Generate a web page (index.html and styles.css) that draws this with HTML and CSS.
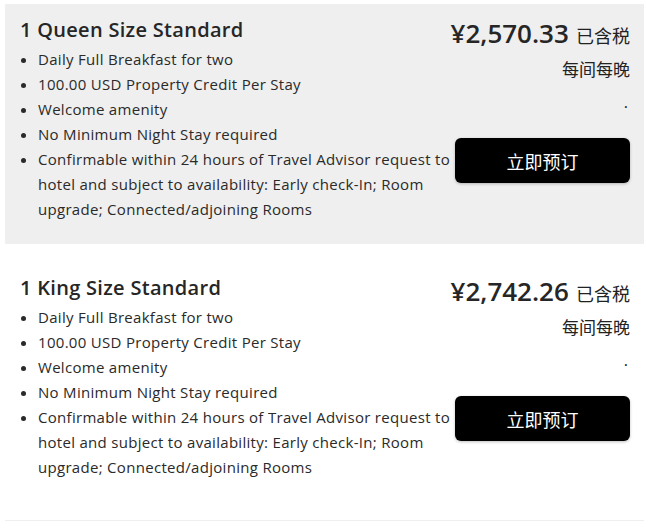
FILE: index.html
```html
<!DOCTYPE html>
<html>
  <head>
    <title>Rooms</title>
    <link rel="stylesheet" href="styles.css">
  </head>
  <body>
    <div class="rooms">
      <div class="room shaded">
        <div class="info">
          <h2>1 Queen Size Standard</h2>
          <ul class="perks">
            <li>Daily Full Breakfast for two</li>
            <li>100.00 USD Property Credit Per Stay</li>
            <li>Welcome amenity</li>
            <li>No Minimum Night Stay required</li>
            <li>Confirmable within 24 hours of Travel Advisor request to hotel and subject to availability: Early check-In; Room upgrade; Connected/adjoining Rooms</li>
          </ul>
        </div>
        <div class="rate">
          <div class="price"><span class="amount">¥2,570.33</span> <span class="tax">已含税</span></div>
          <div class="per">每间每晚</div>
          <div class="note">.</div>
          <button class="book">立即预订</button>
        </div>
      </div>

      <div class="room">
        <div class="info">
          <h2>1 King Size Standard</h2>
          <ul class="perks">
            <li>Daily Full Breakfast for two</li>
            <li>100.00 USD Property Credit Per Stay</li>
            <li>Welcome amenity</li>
            <li>No Minimum Night Stay required</li>
            <li>Confirmable within 24 hours of Travel Advisor request to hotel and subject to availability: Early check-In; Room upgrade; Connected/adjoining Rooms</li>
          </ul>
        </div>
        <div class="rate">
          <div class="price"><span class="amount">¥2,742.26</span> <span class="tax">已含税</span></div>
          <div class="per">每间每晚</div>
          <div class="note">.</div>
          <button class="book">立即预订</button>
        </div>
      </div>

      <div class="room shaded last"></div>
    </div>
  </body>
</html>
```

FILE: styles.css
```css
body {
  margin: 0;
  padding: 0;
  font-family: "Open Sans", "Noto Sans CJK SC", sans-serif;
  color: #222;
}

.rooms {
  padding: 4px 11px 0 5px;
}

.room {
  display: flex;
  justify-content: space-between;
  height: 240px;
  box-sizing: border-box;
  padding: 12px 14px 0 15px;
  margin-bottom: 18px;
}

.room.last {
  height: 3px;
  margin-bottom: 0;
}

.shaded {
  background-color: #efefef;
}

.info {
  flex: 1;
}

.info h2 {
  margin: 0 0 3px 0;
  font-size: 20px;
  font-weight: 600;
  line-height: 28px;
  letter-spacing: 0.3px;
  color: #262626;
}

.perks {
  margin: 0;
  padding-left: 18px;
  font-size: 15px;
  line-height: 25px;
  letter-spacing: 0.3px;
  color: #2a2a2a;
}

.rate {
  display: flex;
  flex-direction: column;
  align-items: flex-end;
  width: 175px;
  text-align: right;
}

.price {
  line-height: 34px;
  white-space: nowrap;
}

.amount {
  font-size: 26px;
  font-weight: 600;
  color: #262626;
}

.tax {
  margin-left: 3px;
  font-size: 18px;
}

.per {
  font-size: 17px;
  line-height: 32px;
}

.note {
  font-size: 16px;
  line-height: 32px;
  padding-right: 2px;
}

.book {
  margin-top: 20px;
  width: 175px;
  height: 45px;
  background-color: #000;
  color: #fff;
  border: none;
  border-radius: 6px;
  font-family: "Noto Sans CJK SC", sans-serif;
  font-size: 18px;
  box-shadow: 0 1px 3px rgba(0, 0, 0, 0.25);
  cursor: pointer;
}
```
